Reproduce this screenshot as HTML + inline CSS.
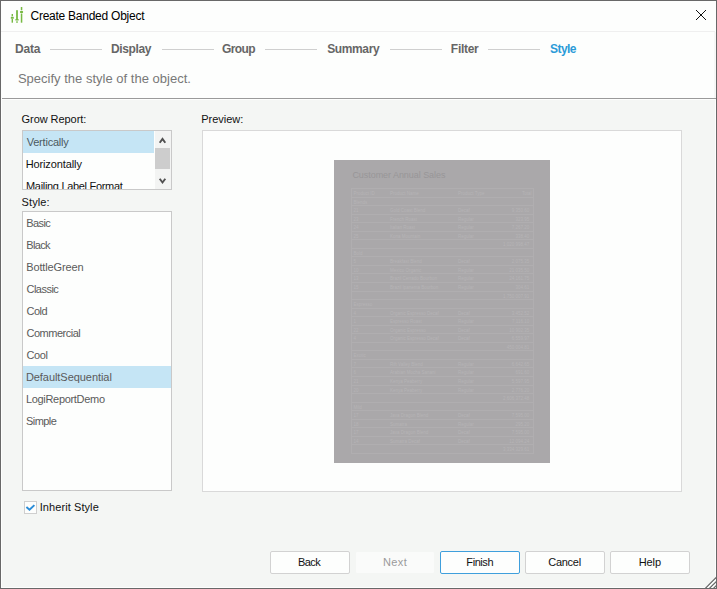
<!DOCTYPE html>
<html><head><meta charset="utf-8"><title>Create Banded Object</title>
<style>
*{box-sizing:border-box;margin:0;padding:0}
html,body{width:717px;height:589px;overflow:hidden;background:#f4f6f4}
body{font-family:"Liberation Sans",Arial,sans-serif;font-size:11px;color:#111;position:relative}
span{display:inline-block}
.abs{position:absolute}
#win{position:absolute;left:0;top:0;width:717px;height:589px;border:1px solid #686868;background:#f4f6f4}
#inner{position:absolute;left:1px;top:1px;width:715px;height:587px;border:1px solid #fdfefd;border-top:none}
#titlebar{position:absolute;left:1px;top:1px;width:715px;height:30px;background:#fdfefd}
#title{position:absolute;left:30px;top:8px;font-size:12px;line-height:16px;color:#000;white-space:nowrap}
#tline{position:absolute;left:1px;top:31px;width:714px;height:1px;background:#efefef}
#head{position:absolute;left:1px;top:32px;width:715px;height:66px;background:#fdfefd}
#hsep{position:absolute;left:2px;top:98px;width:714px;height:1px;background:#9a9a9a;box-shadow:0 1px 0 #fdfefd}
.step{position:absolute;top:41px;font-weight:bold;font-size:12px;line-height:16px;color:#666;white-space:nowrap}
.step.act{color:#2b9bd8}
.sline{position:absolute;top:49px;height:1px;width:52px;background:#cfcfcf}
#desc{position:absolute;left:18px;top:71px;font-size:13px;line-height:16px;color:#787878;white-space:nowrap}
.lbl{position:absolute;font-size:11px;line-height:14px;color:#111;white-space:nowrap}
.box{position:absolute;border:1px solid #c9c9c9;background:#fdfefd;overflow:hidden}
.li{height:22px;line-height:22px;padding-left:4px;white-space:nowrap;font-size:11px}
.sel{background:#c5e5f5}
#grow .li{color:#111;width:131px}
#grow .sel{color:#4b5960}
#style .li{color:#5a5a5a}
#sb{position:absolute;left:132px;top:0;width:16px;height:58px;background:#f3f4f3}
#thumb{position:absolute;left:0px;top:17px;width:15px;height:21px;background:#cdcdcd}
.btn{position:absolute;top:551px;width:80px;height:23px;border:1px solid #d2d2d2;border-radius:2px;background:#fdfefd;text-align:center;line-height:21px;font-size:11px;color:#111;white-space:nowrap}
.btn.dis{border-color:#f4f6f4;background:#fafbfa;color:#9a9a9a}
.btn.def{border-color:#3f9fdc}
#cb{position:absolute;left:24px;top:501px;width:13px;height:13px;border:1px solid #cfcfcf;background:#fdfefd}
#pv{position:absolute;left:202px;top:130px;width:480px;height:362px;border:1px solid #d9d9d9;background:#fdfefd}
#page{position:absolute;left:334px;top:160px;width:216px;height:303px;background:#aaa8aa;overflow:hidden}
#ptitle{position:absolute;left:18.4px;top:9.3px;font-size:9px;line-height:12px;color:#989698;white-space:nowrap;letter-spacing:-0.05px}
#tbl{position:absolute;left:17px;top:28px;width:183px;border-top:1px solid #b0aeb0;border-left:1px solid #b0aeb0;border-right:1px solid #b0aeb0;font-size:4.5px;color:#b6b4b6}
.tr{position:relative;height:8.56px;border-bottom:1px solid #b0aeb0;line-height:9.9px;white-space:nowrap}
.tr span{position:absolute;top:0}
.c1{left:1.5px}.c2{left:38px}.c3{left:106px}.c4{right:3.8px}.tr:first-child .c4{right:1.6px}
</style></head><body>
<div id="win"></div>
<div id="inner"></div>
<div id="titlebar"></div>
<svg class="abs" style="left:10px;top:6px" width="15" height="18" viewBox="0 0 15 18">
<g fill="#77b943">
<rect x="1.6" y="8" width="1.4" height="2.2"/><rect x="1.6" y="13" width="1.4" height="3.7"/><rect x="0.8" y="10.8" width="3" height="2" rx="0.6"/>
<rect x="6.1" y="4.2" width="1.8" height="9"/><rect x="5.3" y="13" width="3.4" height="1.6" rx="0.6"/><rect x="6.1" y="15.4" width="1.8" height="1.3"/>
<rect x="10.8" y="1" width="1.5" height="3.3"/><rect x="10" y="4.9" width="3.1" height="2" rx="0.6"/><rect x="10.8" y="7.5" width="1.5" height="9.2"/>
</g></svg>
<div id="title"><span id="t_title" style="letter-spacing:-0.251px;margin-left:0.51px;">Create Banded Object</span></div>
<svg class="abs" style="left:695px;top:9px" width="12" height="12" viewBox="0 0 12 12"><path d="M1 1 L11 11 M11 1 L1 11" stroke="#111" stroke-width="1" fill="none"/></svg>
<div id="tline"></div>
<div id="head"></div><div class="abs" style="left:714px;top:32px;width:2px;height:66px;background:#f6f7f6"></div>
<div class="step" style="left:15px"><span id="st_Data" style="letter-spacing:-0.229px;margin-left:0.04px;">Data</span></div><div class="sline" style="left:50px"></div>
<div class="step" style="left:111px"><span id="st_Display" style="letter-spacing:-0.385px;">Display</span></div><div class="sline" style="left:162px"></div>
<div class="step" style="left:222px"><span id="st_Group" style="letter-spacing:-0.550px;margin-left:-0.14px;">Group</span></div><div class="sline" style="left:265px"></div>
<div class="step" style="left:327px"><span id="st_Summary" style="letter-spacing:-0.378px;margin-left:0.21px;">Summary</span></div><div class="sline" style="left:390px"></div>
<div class="step" style="left:451px"><span id="st_Filter" style="letter-spacing:-0.293px;margin-left:-0.16px;">Filter</span></div><div class="sline" style="left:488px"></div>
<div class="step act" style="left:550px"><span id="st_Style" style="letter-spacing:-0.544px;margin-left:0.01px;">Style</span></div>
<div id="desc"><span id="t_desc" style="letter-spacing:0.008px;margin-left:-0.08px;">Specify the style of the object.</span></div>
<div id="hsep"></div>

<div class="lbl" style="left:21px;top:112px"><span id="l_grow" style="letter-spacing:-0.053px;margin-left:0.52px;">Grow Report:</span></div>
<div class="box" id="grow" style="left:22px;top:130px;width:150px;height:60px">
<div class="li sel"><span id="g_vert" style="letter-spacing:-0.200px;margin-left:-0.36px;">Vertically</span></div>
<div class="li"><span id="g_horiz" style="letter-spacing:-0.110px;margin-left:-1.37px;">Horizontally</span></div>
<div class="li"><span id="g_mail" style="letter-spacing:-0.311px;margin-left:-1.04px;">Mailing Label Format</span></div>
<div id="sb"><div id="thumb"></div>
<svg class="abs" style="left:2px;top:4px" width="11" height="10" viewBox="0 0 11 10"><path d="M2.7 7.8 L5.5 3.9 L8.3 7.8" stroke="#505050" stroke-width="1.9" fill="none"/></svg>
<svg class="abs" style="left:2px;top:44px" width="11" height="10" viewBox="0 0 11 10"><path d="M2.7 3.7 L5.5 7.5 L8.3 3.7" stroke="#505050" stroke-width="1.9" fill="none"/></svg>
</div>
</div>
<div class="lbl" style="left:21px;top:195px"><span id="l_style" style="letter-spacing:0.125px;margin-left:0.49px;">Style:</span></div>
<div class="box" id="style" style="left:22px;top:211px;width:150px;height:280px">
<div class="li"><span id="s_Basic" style="letter-spacing:-0.556px;margin-left:-0.84px;">Basic</span></div>
<div class="li"><span id="s_Black" style="letter-spacing:-0.616px;margin-left:-0.84px;">Black</span></div>
<div class="li"><span id="s_BottleGreen" style="letter-spacing:-0.120px;margin-left:-0.84px;">BottleGreen</span></div>
<div class="li"><span id="s_Classic" style="letter-spacing:-0.518px;margin-left:-0.49px;">Classic</span></div>
<div class="li"><span id="s_Cold" style="letter-spacing:-0.542px;margin-left:-0.49px;">Cold</span></div>
<div class="li"><span id="s_Commercial" style="letter-spacing:-0.486px;margin-left:-0.49px;">Commercial</span></div>
<div class="li"><span id="s_Cool" style="letter-spacing:-0.412px;margin-left:-0.49px;">Cool</span></div>
<div class="li sel"><span id="s_DefaultSequential" style="letter-spacing:-0.056px;margin-left:-1.10px;">DefaultSequential</span></div>
<div class="li"><span id="s_LogiReportDemo" style="letter-spacing:-0.313px;margin-left:-1.08px;">LogiReportDemo</span></div>
<div class="li"><span id="s_Simple" style="letter-spacing:-0.580px;margin-left:-0.96px;">Simple</span></div>
</div>
<div id="cb"><svg class="abs" style="left:0;top:0" width="11" height="11" viewBox="0 0 11 11"><path d="M1.4 5.0 L4.5 7.8 L9.4 3.1" stroke="#2a8dd8" stroke-width="1.9" fill="none"/></svg></div>
<div class="lbl" style="left:41px;top:500px"><span id="l_inh" style="letter-spacing:0.088px;margin-left:-1.39px;">Inherit Style</span></div>

<div class="lbl" style="left:201px;top:112px"><span id="l_prev" style="letter-spacing:0.003px;margin-left:0.14px;">Preview:</span></div>
<div id="pv"></div>
<div id="page">
<div id="ptitle">Customer Annual Sales</div>
<div id="tbl">
<div class="tr"><span class="c1">Product ID</span><span class="c2">Product Name</span><span class="c3">Product Type</span><span class="c4">Total</span></div>
<div class="tr"><span class="c1">Blends</span><span class="c2"></span><span class="c3"></span><span class="c4"></span></div>
<div class="tr"><span class="c1">21</span><span class="c2">Gold Coast Blend</span><span class="c3">Decaf</span><span class="c4">9,350.60</span></div>
<div class="tr"><span class="c1">23</span><span class="c2">French Roast</span><span class="c3">Regular</span><span class="c4">323.95</span></div>
<div class="tr"><span class="c1">24</span><span class="c2">Italian Roast</span><span class="c3">Regular</span><span class="c4">7,267.20</span></div>
<div class="tr"><span class="c1">25</span><span class="c2">Kona Mountain</span><span class="c3">Regular</span><span class="c4">338.40</span></div>
<div class="tr"><span class="c1"></span><span class="c2"></span><span class="c3"></span><span class="c4">1,020,998.47</span></div>
<div class="tr"><span class="c1">Bold</span><span class="c2"></span><span class="c3"></span><span class="c4"></span></div>
<div class="tr"><span class="c1">5</span><span class="c2">Breakfast Blend</span><span class="c3">Decaf</span><span class="c4">2,075.35</span></div>
<div class="tr"><span class="c1">10</span><span class="c2">Mexico Organic</span><span class="c3">Regular</span><span class="c4">21,035.50</span></div>
<div class="tr"><span class="c1">13</span><span class="c2">Brazil Cerrado Bourbon</span><span class="c3">Regular</span><span class="c4">24,161.75</span></div>
<div class="tr"><span class="c1">15</span><span class="c2">Brazil Ipanema Bourbon</span><span class="c3">Regular</span><span class="c4">304.61</span></div>
<div class="tr"><span class="c1"></span><span class="c2"></span><span class="c3"></span><span class="c4">1,750,007.91</span></div>
<div class="tr"><span class="c1">Espresso</span><span class="c2"></span><span class="c3"></span><span class="c4"></span></div>
<div class="tr"><span class="c1">4</span><span class="c2">Organic Espresso Decaf</span><span class="c3">Decaf</span><span class="c4">3,452.52</span></div>
<div class="tr"><span class="c1">1</span><span class="c2">Espresso Roast</span><span class="c3">Regular</span><span class="c4">7,116.10</span></div>
<div class="tr"><span class="c1">22</span><span class="c2">Organic Espresso</span><span class="c3">Decaf</span><span class="c4">10,902.35</span></div>
<div class="tr"><span class="c1">4</span><span class="c2">Organic Espresso Decaf</span><span class="c3">Decaf</span><span class="c4">6,559.97</span></div>
<div class="tr"><span class="c1"></span><span class="c2"></span><span class="c3"></span><span class="c4">450,004.81</span></div>
<div class="tr"><span class="c1">Exotic</span><span class="c2"></span><span class="c3"></span><span class="c4"></span></div>
<div class="tr"><span class="c1">7</span><span class="c2">Rift Valley Blend</span><span class="c3">Regular</span><span class="c4">6,642.65</span></div>
<div class="tr"><span class="c1">6</span><span class="c2">Arabian Mocha Sanani</span><span class="c3">Regular</span><span class="c4">691.60</span></div>
<div class="tr"><span class="c1">21</span><span class="c2">Kenya Peaberry</span><span class="c3">Regular</span><span class="c4">5,597.95</span></div>
<div class="tr"><span class="c1">20</span><span class="c2">Kenya Peaberry</span><span class="c3">Regular</span><span class="c4">2,776.20</span></div>
<div class="tr"><span class="c1"></span><span class="c2"></span><span class="c3"></span><span class="c4">2,606,372.48</span></div>
<div class="tr"><span class="c1">Mild</span><span class="c2"></span><span class="c3"></span><span class="c4"></span></div>
<div class="tr"><span class="c1">17</span><span class="c2">Java Dragon Blend</span><span class="c3">Decaf</span><span class="c4">7,595.00</span></div>
<div class="tr"><span class="c1">18</span><span class="c2">Sumatra</span><span class="c3">Regular</span><span class="c4">295.20</span></div>
<div class="tr"><span class="c1">17</span><span class="c2">Java Dragon Blend</span><span class="c3">Decaf</span><span class="c4">7,595.00</span></div>
<div class="tr"><span class="c1">14</span><span class="c2">Sumatra Decaf</span><span class="c3">Decaf</span><span class="c4">12,094.24</span></div>
<div class="tr"><span class="c1"></span><span class="c2"></span><span class="c3"></span><span class="c4">3,334,329.61</span></div>
</div>
</div>

<div class="btn" style="left:270px"><span id="b_Back" style="letter-spacing:-0.600px;margin-left:-1.89px;">Back</span></div>
<div class="btn dis" style="left:355px"><span id="b_Next" style="letter-spacing:0.403px;margin-left:0.10px;">Next</span></div>
<div class="btn def" style="left:440px"><span id="b_Finish" style="letter-spacing:-0.438px;margin-left:-0.57px;">Finish</span></div>
<div class="btn" style="left:525px"><span id="b_Cancel" style="letter-spacing:-0.288px;margin-left:-0.90px;">Cancel</span></div>
<div class="btn" style="left:610px"><span id="b_Help" style="letter-spacing:-0.056px;margin-left:-0.24px;">Help</span></div>
<svg class="abs" style="left:704px;top:576px" width="12" height="12" viewBox="0 0 12 12"><polygon points="0.8,12 2.8,12 12,2.8 12,0.8" fill="#6e6e6e"/><polygon points="2.8,12 4.9,12 12,4.9 12,2.8" fill="#fdfefd"/><polygon points="4.9,12 6.9,12 12,6.9 12,4.9" fill="#6e6e6e"/><polygon points="6.9,12 9.0,12 12,9.0 12,6.9" fill="#fdfefd"/><polygon points="9.0,12 11.0,12 12,11.0 12,9.0" fill="#6e6e6e"/><polygon points="11.0,12 12.5,12 12,12.5 12,11.0" fill="#fdfefd"/></svg>
</body></html>
